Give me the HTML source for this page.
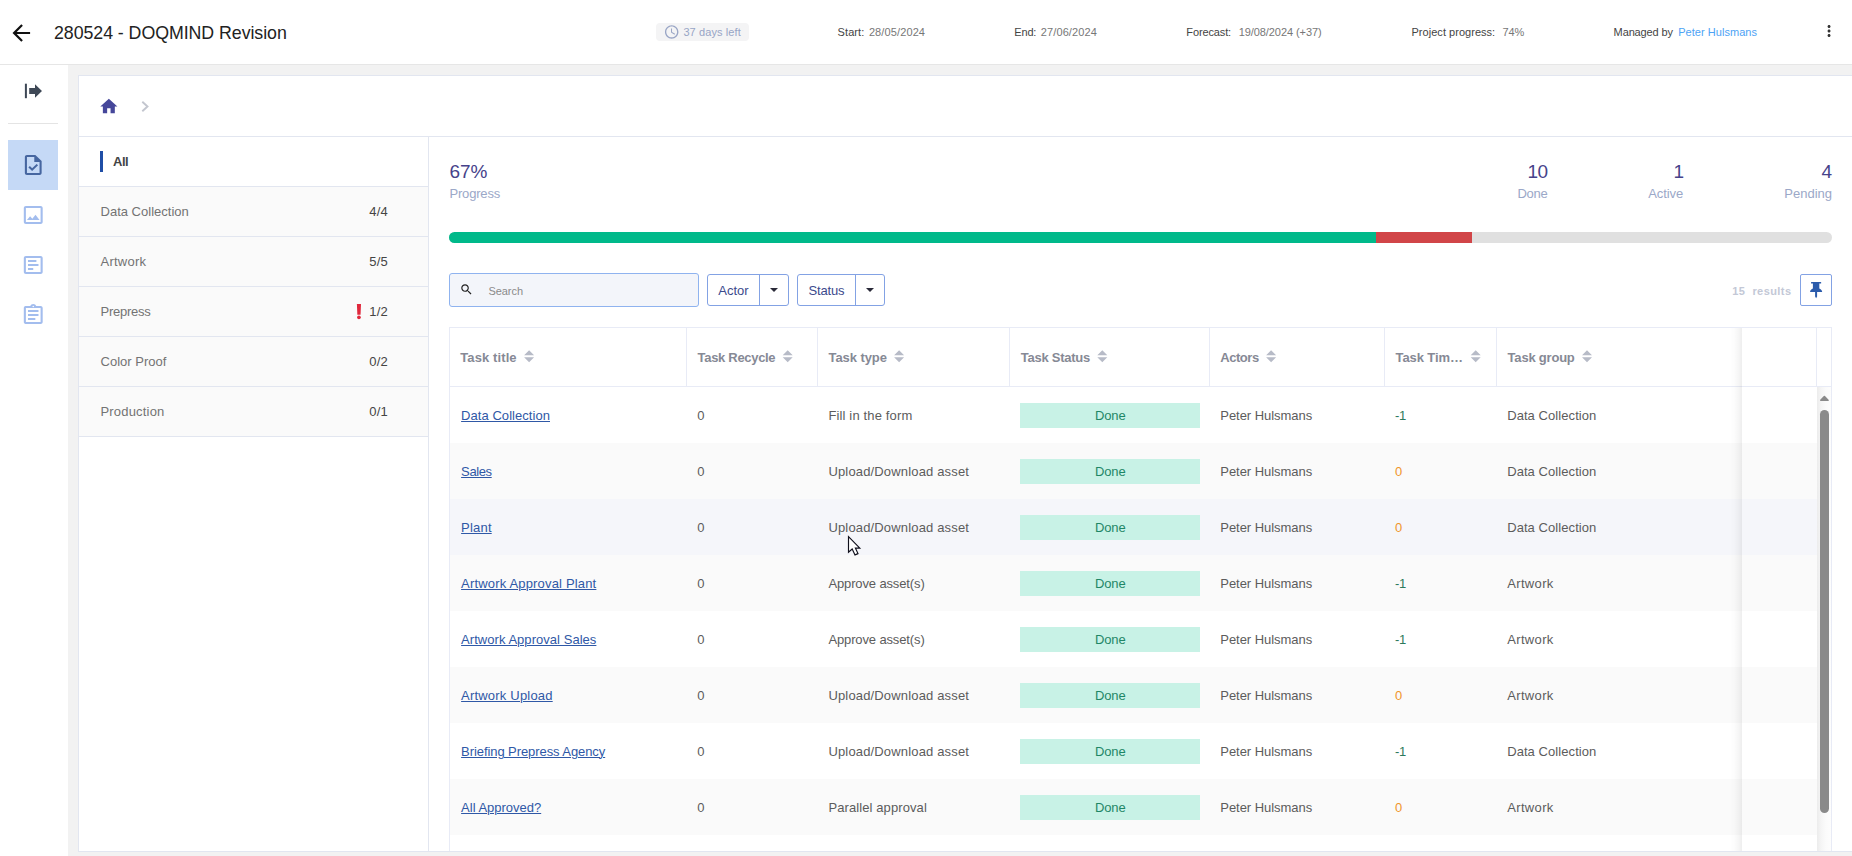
<!DOCTYPE html>
<html lang="en">
<head>
<meta charset="utf-8">
<title>280524 - DOQMIND Revision</title>
<style>
*{box-sizing:border-box;margin:0;padding:0}
html,body{width:1852px;height:856px;overflow:hidden;background:#f2f2f2;font-family:"Liberation Sans",sans-serif;color:#444}
.abs{position:absolute}
.t{position:absolute;white-space:nowrap;line-height:1}
a{color:inherit;text-decoration:underline;text-underline-offset:0.5px;text-decoration-thickness:1px}
#hdr{position:absolute;left:0;top:0;width:1852px;height:65px;background:#fff;border-bottom:1px solid #e6e6e6}
#side{position:absolute;left:0;top:65px;width:68px;height:791px;background:#fff}
#crumb{position:absolute;left:78px;top:75px;width:1780px;height:62px;background:#fff;border:1px solid #e2e6f0}
#left{position:absolute;left:78px;top:136px;width:351px;height:716px;background:#fff;border:1px solid #e2e6f0}
#main{position:absolute;left:428px;top:136px;width:1430px;height:716px;background:#fff;border:1px solid #e2e6f0}
</style>
</head>
<body>
<div id="hdr"></div>
<svg class="abs" style="left:8px;top:19px;overflow:visible" width="26.4" height="26.4" viewBox="-0.091 -0.727 24 24"><path fill="#111" d="M20 11H7.83l5.59-5.59L12 4l-8 8 8 8 1.41-1.41L7.83 13H20v-2z"/></svg>
<div class="t" style="left:54px;top:25px;font-size:17.8px;color:#222;letter-spacing:-0.058px;">280524 - DOQMIND Revision</div>
<div class="abs" style="left:656px;top:23px;width:93px;height:18px;background:#f4f4f5;border-radius:4px"></div>
<svg class="abs" style="left:663px;top:23px;overflow:visible" width="16.2" height="16.2" viewBox="-0.889 -1.185 24 24"><path fill="#9aa6c6" d="M11.99 2C6.47 2 2 6.48 2 12s4.47 10 9.99 10C17.52 22 22 17.52 22 12S17.52 2 11.99 2zM12 20c-4.42 0-8-3.58-8-8s3.58-8 8-8 8 3.58 8 8-3.58 8-8 8zm.5-13H11v6l5.25 3.15.75-1.23-4.5-2.67z"/></svg>
<div class="t" style="left:683.4px;top:27px;font-size:11px;color:#98a5c6;letter-spacing:0.095px;">37 days left</div>
<div class="t" style="left:837.6px;top:27px;font-size:11px;color:#444;letter-spacing:0.086px;">Start:</div>
<div class="t" style="left:868.9px;top:27px;font-size:11px;color:#777;letter-spacing:0.115px;">28/05/2024</div>
<div class="t" style="left:1014.3px;top:27px;font-size:11px;color:#444;letter-spacing:-0.182px;">End:</div>
<div class="t" style="left:1040.8px;top:27px;font-size:11px;color:#777;letter-spacing:0.105px;">27/06/2024</div>
<div class="t" style="left:1186.3px;top:27px;font-size:11px;color:#444;letter-spacing:-0.128px;">Forecast:</div>
<div class="t" style="left:1238.7px;top:27px;font-size:11px;color:#777;letter-spacing:-0.075px;">19/08/2024 (+37)</div>
<div class="t" style="left:1411.5px;top:27px;font-size:11px;color:#444;letter-spacing:0.033px;">Project progress:</div>
<div class="t" style="left:1502.5px;top:27px;font-size:11px;color:#777;letter-spacing:-0.105px;">74%</div>
<div class="t" style="left:1613.6px;top:27px;font-size:11px;color:#444;letter-spacing:-0.124px;">Managed by</div>
<div class="t" style="left:1678.2px;top:27px;font-size:11px;color:#4da3f5;letter-spacing:0.046px;">Peter Hulsmans</div>
<svg class="abs" style="left:1820px;top:22px;overflow:visible" width="18" height="18" viewBox="-0.067 0 24 24"><path fill="#333" d="M12 8c1.1 0 2-.9 2-2s-.9-2-2-2-2 .9-2 2 .9 2 2 2zm0 2c-1.1 0-2 .9-2 2s.9 2 2 2 2-.9 2-2-.9-2-2-2zm0 6c-1.1 0-2 .9-2 2s.9 2 2 2 2-.9 2-2-.9-2-2-2z"/></svg>
<div id="side"></div>
<svg class="abs" style="left:24px;top:83px;overflow:visible" width="19" height="16" viewBox="0 0 19 16"><rect x="0.9" y="0.7" width="2" height="14.5" fill="#3e4856"/><path fill="#3e4856" d="M5.2 5h5.8V1.2L18 7.95l-7 6.75v-3.8H5.2z"/></svg>
<div class="abs" style="left:8px;top:123px;width:50px;height:1px;background:#e4e4e4"></div>
<div class="abs" style="left:8px;top:140px;width:50px;height:50px;background:#c5d9f6"></div>
<svg class="abs" style="left:20px;top:153px;overflow:visible" width="25.2" height="24" viewBox="-0.619 0 24 24" preserveAspectRatio="none"><path fill="#4666a0" d="M14 2H6c-1.1 0-1.99.9-1.99 2L4 20c0 1.1.89 2 1.99 2H18c1.1 0 2-.9 2-2V8l-6-6zm4 18H6V4h7v5h5v11zM8.82 13.05L7.4 14.46 10.94 18l5.66-5.66-1.41-1.41-4.24 4.24-2.13-2.12z"/></svg>
<svg class="abs" style="left:20px;top:203px;overflow:visible" width="25.2" height="24" viewBox="-0.619 0 24 24" preserveAspectRatio="none"><path fill="#a3bdee" d="M19 5v14H5V5h14m0-2H5c-1.1 0-2 .9-2 2v14c0 1.1.9 2 2 2h14c1.1 0 2-.9 2-2V5c0-1.1-.9-2-2-2zm-4.86 8.86l-3 3.87L9 13.14 6 17h12l-3.86-5.14z"/></svg>
<svg class="abs" style="left:20px;top:253px;overflow:visible" width="25.2" height="24" viewBox="-0.619 0 24 24" preserveAspectRatio="none"><path fill="#a3bdee" d="M19 5v14H5V5h14m0-2H5c-1.1 0-2 .9-2 2v14c0 1.1.9 2 2 2h14c1.1 0 2-.9 2-2V5c0-1.1-.9-2-2-2zM7 7h8v2H7zm0 4h10v2H7zm0 4h5v2H7z"/></svg>
<svg class="abs" style="left:20px;top:303px;overflow:visible" width="25.2" height="24" viewBox="-0.619 0 24 24" preserveAspectRatio="none"><path fill="#a3bdee" d="M7 15h7v2H7zm0-4h10v2H7zm0-4h10v2H7zm12-4h-4.18C14.4 1.84 13.3 1 12 1c-1.3 0-2.4.84-2.82 2H5c-.14 0-.27.01-.4.04-.39.08-.74.28-1.01.55-.18.18-.33.4-.43.64-.1.23-.16.49-.16.77v14c0 .27.06.54.16.78s.25.45.43.64c.27.27.62.47 1.01.55.13.02.26.03.4.03h14c1.1 0 2-.9 2-2V5c0-1.1-.9-2-2-2zm-7-.25c.41 0 .75.34.75.75s-.34.75-.75.75-.75-.34-.75-.75.34-.75.75-.75zM19 19H5V5h14v14z"/></svg>
<div id="crumb"></div>
<svg class="abs" style="left:98px;top:96px;overflow:visible" width="20.5" height="20.5" viewBox="-0.702 -0.234 24 24"><path fill="#46479a" d="M10 20v-6h4v6h5v-8h3L12 3 2 12h3v8z"/></svg>
<svg class="abs" style="left:141px;top:101px;overflow:visible" width="8" height="11" viewBox="0 0 8 11"><path fill="none" stroke="#c3c6cf" stroke-width="1.9" d="M1.3 0.8L6.5 5.5 1.3 10.2"/></svg>
<div id="left"></div>
<div class="abs" style="left:79px;top:137px;width:349px;height:50px;border-bottom:1px solid #e2e6f0;background:#fff"></div>
<div class="abs" style="left:100px;top:151px;width:3px;height:21px;background:#1f4ea6"></div>
<div class="t" style="left:113.1px;top:155px;font-size:13px;color:#444;letter-spacing:-0.571px;font-weight:bold;">All</div>
<div class="abs" style="left:79px;top:187px;width:349px;height:50px;border-bottom:1px solid #e2e6f0;background:#fafafa"></div>
<div class="t" style="left:100.5px;top:205px;font-size:13px;color:#737373;letter-spacing:0.009px;">Data Collection</div>
<div class="t" style="left:369.2px;top:205px;font-size:13px;color:#444;letter-spacing:0.209px;">4/4</div>
<div class="abs" style="left:79px;top:237px;width:349px;height:50px;border-bottom:1px solid #e2e6f0;background:#fafafa"></div>
<div class="t" style="left:100.5px;top:255px;font-size:13px;color:#737373;letter-spacing:0.248px;">Artwork</div>
<div class="t" style="left:369.2px;top:255px;font-size:13px;color:#444;letter-spacing:0.209px;">5/5</div>
<div class="abs" style="left:79px;top:287px;width:349px;height:50px;border-bottom:1px solid #e2e6f0;background:#fafafa"></div>
<div class="t" style="left:100.5px;top:305px;font-size:13px;color:#737373;letter-spacing:-0.253px;">Prepress</div>
<div class="t" style="left:369.2px;top:305px;font-size:13px;color:#444;letter-spacing:0.209px;">1/2</div>
<svg class="abs" style="left:356px;top:304px;overflow:visible" width="6" height="16" viewBox="0 0 6 16"><path fill="#e0283c" d="M0.9 0h4.1l-0.45 10.7h-3.2z"/><circle cx="2.95" cy="13.3" r="1.85" fill="#e0283c"/></svg>
<div class="abs" style="left:79px;top:337px;width:349px;height:50px;border-bottom:1px solid #e2e6f0;background:#fafafa"></div>
<div class="t" style="left:100.5px;top:355px;font-size:13px;color:#737373;letter-spacing:0.013px;">Color Proof</div>
<div class="t" style="left:369.2px;top:355px;font-size:13px;color:#444;letter-spacing:0.209px;">0/2</div>
<div class="abs" style="left:79px;top:387px;width:349px;height:50px;border-bottom:1px solid #e2e6f0;background:#fafafa"></div>
<div class="t" style="left:100.5px;top:405px;font-size:13px;color:#737373;letter-spacing:0.185px;">Production</div>
<div class="t" style="left:369.2px;top:405px;font-size:13px;color:#444;letter-spacing:0.209px;">0/1</div>
<div id="main"></div>
<div class="t" style="left:449.4px;top:162px;font-size:19px;color:#46428a;letter-spacing:-0.043px;">67%</div>
<div class="t" style="left:449.5px;top:187px;font-size:13px;color:#9ba8c8;letter-spacing:-0.19px;">Progress</div>
<div class="t" style="left:1527.5px;top:162px;font-size:19px;color:#46428a;letter-spacing:-0.567px;">10</div>
<div class="t" style="left:1517.5px;top:187px;font-size:13px;color:#9ba8c8;letter-spacing:-0.27px;">Done</div>
<div class="t" style="left:1673.5px;top:162px;font-size:19px;color:#46428a;letter-spacing:-1.067px;">1</div>
<div class="t" style="left:1648.3px;top:187px;font-size:13px;color:#9ba8c8;letter-spacing:-0.117px;">Active</div>
<div class="t" style="left:1821.5px;top:162px;font-size:19px;color:#46428a;letter-spacing:-0.067px;">4</div>
<div class="t" style="left:1784.3px;top:187px;font-size:13px;color:#9ba8c8;letter-spacing:-0.002px;">Pending</div>
<div class="abs" style="left:449px;top:232px;width:1383px;height:11px;border-radius:6px;background:#e0e0e0;overflow:hidden"><div class="abs" style="left:0;top:0;width:927px;height:11px;background:#00b98a"></div><div class="abs" style="left:927px;top:0;width:96px;height:11px;background:#d14548"></div></div>
<div class="abs" style="left:449px;top:273px;width:250px;height:34px;border:1px solid #8fb3ef;border-radius:3px;background:#f3f5fa"></div>
<svg class="abs" style="left:459px;top:282px;overflow:visible" width="14" height="14" viewBox="-0.857 -0.857 24 24"><path fill="#222" d="M15.5 14h-.79l-.28-.27C15.41 12.59 16 11.11 16 9.5 16 5.91 13.09 3 9.5 3S3 5.91 3 9.5 5.91 16 9.5 16c1.61 0 3.09-.59 4.23-1.57l.27.28v.79l5 4.99L20.49 19l-4.99-5zm-6 0C7.01 14 5 11.99 5 9.5S7.01 5 9.5 5 14 7.01 14 9.5 11.99 14 9.5 14z"/></svg>
<div class="t" style="left:488.4px;top:286px;font-size:11px;color:#8a8a8a;letter-spacing:-0.042px;">Search</div>
<div class="abs" style="left:707px;top:274px;width:82px;height:32px;border:1px solid #83a2e4;border-radius:3px;background:#fff"></div>
<div class="abs" style="left:759px;top:274px;width:1px;height:32px;background:#83a2e4"></div>
<div class="t" style="left:718.2px;top:284px;font-size:13px;color:#3c4a8c;letter-spacing:0.031px;">Actor</div>
<svg class="abs" style="left:770px;top:288px;overflow:visible" width="8" height="4" viewBox="0 0 8 4"><path fill="#2a2a38" d="M0 0h8L4 4z"/></svg>
<div class="abs" style="left:797px;top:274px;width:88px;height:32px;border:1px solid #83a2e4;border-radius:3px;background:#fff"></div>
<div class="abs" style="left:855px;top:274px;width:1px;height:32px;background:#83a2e4"></div>
<div class="t" style="left:808.4px;top:284px;font-size:13px;color:#3c4a8c;letter-spacing:-0.142px;">Status</div>
<svg class="abs" style="left:866px;top:288px;overflow:visible" width="8" height="4" viewBox="0 0 8 4"><path fill="#2a2a38" d="M0 0h8L4 4z"/></svg>
<div class="t" style="left:1732.3px;top:286px;font-size:11px;color:#c3c8d6;letter-spacing:0.434px;font-weight:bold;">15&nbsp;&nbsp;results</div>
<div class="abs" style="left:1800px;top:274px;width:32px;height:32px;border:1px solid #83a2e4;border-radius:2px;background:#fff"></div>
<svg class="abs" style="left:1810px;top:281px;overflow:visible" width="12" height="16.4" viewBox="-0.1 -0.9 12 16.4"><path fill="#2b5bab" d="M1.4 0h9.2a.5.5 0 0 1 .5.5v.7a.5.5 0 0 1-.5.5H9.2v4.9c1.4.6 2.6 1.7 2.8 3v.5H7v4.6l-1 1.7-1-1.7V10.1H0v-.5c.2-1.3 1.4-2.4 2.8-3V1.7H1.4a.5.5 0 0 1-.5-.5V.5a.5.5 0 0 1 .5-.5z"/></svg>
<div class="abs" style="left:449px;top:327px;width:1383px;height:525px;border:1px solid #e8ebf6;border-bottom:none;background:#fff"></div>
<div class="abs" style="left:450px;top:387px;width:1367px;height:56px;background:#fff"></div>
<div class="t" style="left:461.1px;top:409px;font-size:13px;color:#2f58a6;letter-spacing:0.049px;"><a>Data Collection</a></div>
<div class="t" style="left:697.2px;top:409px;font-size:13px;color:#5c5c5c;letter-spacing:-1.03px;">0</div>
<div class="t" style="left:828.4px;top:409px;font-size:13px;color:#5c5c5c;letter-spacing:0.148px;">Fill in the form</div>
<div class="abs" style="left:1020px;top:403px;width:180px;height:25px;background:#c8f2e6"></div>
<div class="t" style="left:1094.9px;top:409px;font-size:13px;color:#1f8766;letter-spacing:-0.095px;">Done</div>
<div class="t" style="left:1220.3px;top:409px;font-size:13px;color:#5c5c5c;letter-spacing:-0.042px;">Peter Hulsmans</div>
<div class="t" style="left:1394.9px;top:409px;font-size:13px;color:#2c7a5c;letter-spacing:-0.23px;">-1</div>
<div class="t" style="left:1507.2px;top:409px;font-size:13px;color:#5c5c5c;letter-spacing:0.069px;">Data Collection</div>
<div class="abs" style="left:450px;top:443px;width:1367px;height:56px;background:#fafafa"></div>
<div class="t" style="left:461.1px;top:465px;font-size:13px;color:#2f58a6;letter-spacing:-0.384px;"><a>Sales</a></div>
<div class="t" style="left:697.2px;top:465px;font-size:13px;color:#5c5c5c;letter-spacing:-1.03px;">0</div>
<div class="t" style="left:828.4px;top:465px;font-size:13px;color:#5c5c5c;letter-spacing:0.161px;">Upload/Download asset</div>
<div class="abs" style="left:1020px;top:459px;width:180px;height:25px;background:#c8f2e6"></div>
<div class="t" style="left:1094.9px;top:465px;font-size:13px;color:#1f8766;letter-spacing:-0.095px;">Done</div>
<div class="t" style="left:1220.3px;top:465px;font-size:13px;color:#5c5c5c;letter-spacing:-0.042px;">Peter Hulsmans</div>
<div class="t" style="left:1394.9px;top:465px;font-size:13px;color:#f0952b;letter-spacing:-0.33px;">0</div>
<div class="t" style="left:1507.2px;top:465px;font-size:13px;color:#5c5c5c;letter-spacing:0.069px;">Data Collection</div>
<div class="abs" style="left:450px;top:499px;width:1367px;height:56px;background:#f5f6fa"></div>
<div class="t" style="left:461.1px;top:521px;font-size:13px;color:#2f58a6;letter-spacing:0.194px;"><a>Plant</a></div>
<div class="t" style="left:697.2px;top:521px;font-size:13px;color:#5c5c5c;letter-spacing:-1.03px;">0</div>
<div class="t" style="left:828.4px;top:521px;font-size:13px;color:#5c5c5c;letter-spacing:0.161px;">Upload/Download asset</div>
<div class="abs" style="left:1020px;top:515px;width:180px;height:25px;background:#c8f2e6"></div>
<div class="t" style="left:1094.9px;top:521px;font-size:13px;color:#1f8766;letter-spacing:-0.095px;">Done</div>
<div class="t" style="left:1220.3px;top:521px;font-size:13px;color:#5c5c5c;letter-spacing:-0.042px;">Peter Hulsmans</div>
<div class="t" style="left:1394.9px;top:521px;font-size:13px;color:#f0952b;letter-spacing:-0.33px;">0</div>
<div class="t" style="left:1507.2px;top:521px;font-size:13px;color:#5c5c5c;letter-spacing:0.069px;">Data Collection</div>
<div class="abs" style="left:450px;top:555px;width:1367px;height:56px;background:#fafafa"></div>
<div class="t" style="left:461.1px;top:577px;font-size:13px;color:#2f58a6;letter-spacing:0.172px;"><a>Artwork Approval Plant</a></div>
<div class="t" style="left:697.2px;top:577px;font-size:13px;color:#5c5c5c;letter-spacing:-1.03px;">0</div>
<div class="t" style="left:828.4px;top:577px;font-size:13px;color:#5c5c5c;letter-spacing:-0.129px;">Approve asset(s)</div>
<div class="abs" style="left:1020px;top:571px;width:180px;height:25px;background:#c8f2e6"></div>
<div class="t" style="left:1094.9px;top:577px;font-size:13px;color:#1f8766;letter-spacing:-0.095px;">Done</div>
<div class="t" style="left:1220.3px;top:577px;font-size:13px;color:#5c5c5c;letter-spacing:-0.042px;">Peter Hulsmans</div>
<div class="t" style="left:1394.9px;top:577px;font-size:13px;color:#2c7a5c;letter-spacing:-0.23px;">-1</div>
<div class="t" style="left:1507.2px;top:577px;font-size:13px;color:#5c5c5c;letter-spacing:0.348px;">Artwork</div>
<div class="abs" style="left:450px;top:611px;width:1367px;height:56px;background:#fff"></div>
<div class="t" style="left:461.1px;top:633px;font-size:13px;color:#2f58a6;letter-spacing:0.041px;"><a>Artwork Approval Sales</a></div>
<div class="t" style="left:697.2px;top:633px;font-size:13px;color:#5c5c5c;letter-spacing:-1.03px;">0</div>
<div class="t" style="left:828.4px;top:633px;font-size:13px;color:#5c5c5c;letter-spacing:-0.129px;">Approve asset(s)</div>
<div class="abs" style="left:1020px;top:627px;width:180px;height:25px;background:#c8f2e6"></div>
<div class="t" style="left:1094.9px;top:633px;font-size:13px;color:#1f8766;letter-spacing:-0.095px;">Done</div>
<div class="t" style="left:1220.3px;top:633px;font-size:13px;color:#5c5c5c;letter-spacing:-0.042px;">Peter Hulsmans</div>
<div class="t" style="left:1394.9px;top:633px;font-size:13px;color:#2c7a5c;letter-spacing:-0.23px;">-1</div>
<div class="t" style="left:1507.2px;top:633px;font-size:13px;color:#5c5c5c;letter-spacing:0.348px;">Artwork</div>
<div class="abs" style="left:450px;top:667px;width:1367px;height:56px;background:#fafafa"></div>
<div class="t" style="left:461.1px;top:689px;font-size:13px;color:#2f58a6;letter-spacing:0.195px;"><a>Artwork Upload</a></div>
<div class="t" style="left:697.2px;top:689px;font-size:13px;color:#5c5c5c;letter-spacing:-1.03px;">0</div>
<div class="t" style="left:828.4px;top:689px;font-size:13px;color:#5c5c5c;letter-spacing:0.161px;">Upload/Download asset</div>
<div class="abs" style="left:1020px;top:683px;width:180px;height:25px;background:#c8f2e6"></div>
<div class="t" style="left:1094.9px;top:689px;font-size:13px;color:#1f8766;letter-spacing:-0.095px;">Done</div>
<div class="t" style="left:1220.3px;top:689px;font-size:13px;color:#5c5c5c;letter-spacing:-0.042px;">Peter Hulsmans</div>
<div class="t" style="left:1394.9px;top:689px;font-size:13px;color:#f0952b;letter-spacing:-0.33px;">0</div>
<div class="t" style="left:1507.2px;top:689px;font-size:13px;color:#5c5c5c;letter-spacing:0.348px;">Artwork</div>
<div class="abs" style="left:450px;top:723px;width:1367px;height:56px;background:#fff"></div>
<div class="t" style="left:461.1px;top:745px;font-size:13px;color:#2f58a6;letter-spacing:-0.078px;"><a>Briefing Prepress Agency</a></div>
<div class="t" style="left:697.2px;top:745px;font-size:13px;color:#5c5c5c;letter-spacing:-1.03px;">0</div>
<div class="t" style="left:828.4px;top:745px;font-size:13px;color:#5c5c5c;letter-spacing:0.161px;">Upload/Download asset</div>
<div class="abs" style="left:1020px;top:739px;width:180px;height:25px;background:#c8f2e6"></div>
<div class="t" style="left:1094.9px;top:745px;font-size:13px;color:#1f8766;letter-spacing:-0.095px;">Done</div>
<div class="t" style="left:1220.3px;top:745px;font-size:13px;color:#5c5c5c;letter-spacing:-0.042px;">Peter Hulsmans</div>
<div class="t" style="left:1394.9px;top:745px;font-size:13px;color:#2c7a5c;letter-spacing:-0.23px;">-1</div>
<div class="t" style="left:1507.2px;top:745px;font-size:13px;color:#5c5c5c;letter-spacing:0.069px;">Data Collection</div>
<div class="abs" style="left:450px;top:779px;width:1367px;height:56px;background:#fafafa"></div>
<div class="t" style="left:461.1px;top:801px;font-size:13px;color:#2f58a6;letter-spacing:-0.01px;"><a>All Approved?</a></div>
<div class="t" style="left:697.2px;top:801px;font-size:13px;color:#5c5c5c;letter-spacing:-1.03px;">0</div>
<div class="t" style="left:828.4px;top:801px;font-size:13px;color:#5c5c5c;letter-spacing:0.098px;">Parallel approval</div>
<div class="abs" style="left:1020px;top:795px;width:180px;height:25px;background:#c8f2e6"></div>
<div class="t" style="left:1094.9px;top:801px;font-size:13px;color:#1f8766;letter-spacing:-0.095px;">Done</div>
<div class="t" style="left:1220.3px;top:801px;font-size:13px;color:#5c5c5c;letter-spacing:-0.042px;">Peter Hulsmans</div>
<div class="t" style="left:1394.9px;top:801px;font-size:13px;color:#f0952b;letter-spacing:-0.33px;">0</div>
<div class="t" style="left:1507.2px;top:801px;font-size:13px;color:#5c5c5c;letter-spacing:0.348px;">Artwork</div>
<div class="abs" style="left:450px;top:328px;width:1381px;height:59px;background:#fff;border-bottom:1px solid #e8ebf6"></div>
<div class="t" style="left:460.3px;top:351px;font-size:13px;color:#868995;letter-spacing:0.101px;font-weight:bold;">Task title</div>
<svg class="abs" style="left:524px;top:350px;overflow:visible" width="10" height="12" viewBox="-0.1 -0.3 10 12"><path fill="#b7bbc7" d="M0 5L5 0l5 5zM0 7L5 12l5-5z"/></svg>
<div class="abs" style="left:686px;top:328px;width:1px;height:59px;background:#e8ebf6"></div>
<div class="t" style="left:697.6px;top:351px;font-size:13px;color:#868995;letter-spacing:-0.311px;font-weight:bold;">Task Recycle</div>
<svg class="abs" style="left:782px;top:350px;overflow:visible" width="10" height="12" viewBox="-0.7 -0.3 10 12"><path fill="#b7bbc7" d="M0 5L5 0l5 5zM0 7L5 12l5-5z"/></svg>
<div class="abs" style="left:817px;top:328px;width:1px;height:59px;background:#e8ebf6"></div>
<div class="t" style="left:828.5px;top:351px;font-size:13px;color:#868995;letter-spacing:-0.079px;font-weight:bold;">Task type</div>
<svg class="abs" style="left:894px;top:350px;overflow:visible" width="10" height="12" viewBox="-0.1 -0.3 10 12"><path fill="#b7bbc7" d="M0 5L5 0l5 5zM0 7L5 12l5-5z"/></svg>
<div class="abs" style="left:1009px;top:328px;width:1px;height:59px;background:#e8ebf6"></div>
<div class="t" style="left:1020.7px;top:351px;font-size:13px;color:#868995;letter-spacing:-0.246px;font-weight:bold;">Task Status</div>
<svg class="abs" style="left:1097px;top:350px;overflow:visible" width="10" height="12" viewBox="-0.3 -0.3 10 12"><path fill="#b7bbc7" d="M0 5L5 0l5 5zM0 7L5 12l5-5z"/></svg>
<div class="abs" style="left:1209px;top:328px;width:1px;height:59px;background:#e8ebf6"></div>
<div class="t" style="left:1220.2px;top:351px;font-size:13px;color:#868995;letter-spacing:-0.43px;font-weight:bold;">Actors</div>
<svg class="abs" style="left:1266px;top:350px;overflow:visible" width="10" height="12" viewBox="-0.1 -0.3 10 12"><path fill="#b7bbc7" d="M0 5L5 0l5 5zM0 7L5 12l5-5z"/></svg>
<div class="abs" style="left:1384px;top:328px;width:1px;height:59px;background:#e8ebf6"></div>
<div class="t" style="left:1395.5px;top:351px;font-size:13px;color:#868995;letter-spacing:-0.084px;font-weight:bold;">Task Tim…</div>
<svg class="abs" style="left:1470px;top:350px;overflow:visible" width="10" height="12" viewBox="-0.7 -0.3 10 12"><path fill="#b7bbc7" d="M0 5L5 0l5 5zM0 7L5 12l5-5z"/></svg>
<div class="abs" style="left:1496px;top:328px;width:1px;height:59px;background:#e8ebf6"></div>
<div class="t" style="left:1507.6px;top:351px;font-size:13px;color:#868995;letter-spacing:-0.21px;font-weight:bold;">Task group</div>
<svg class="abs" style="left:1582px;top:350px;overflow:visible" width="10" height="12" viewBox="0 -0.3 10 12"><path fill="#b7bbc7" d="M0 5L5 0l5 5zM0 7L5 12l5-5z"/></svg>
<div class="abs" style="left:1730px;top:328px;width:12px;height:523px;background:linear-gradient(90deg,rgba(0,0,0,0),rgba(0,0,0,0.012) 35%,rgba(0,0,0,0.035) 70%,rgba(0,0,0,0.065))"></div>
<div class="abs" style="left:1816px;top:328px;width:1px;height:59px;background:#e8ebf6"></div>
<div class="abs" style="left:1817px;top:387px;width:14px;height:465px;background:linear-gradient(90deg,#ececec,#f5f5f5 30%,#fbfbfb 65%,#fdfdfd)"></div>
<svg class="abs" style="left:1819px;top:395px;overflow:visible" width="10" height="6" viewBox="0 0 10 6"><path fill="#8a8a8a" stroke="#8a8a8a" stroke-width="1.6" stroke-linejoin="round" d="M1.8 5.3L5.4 1.5l3.6 3.8z"/></svg>
<div class="abs" style="left:1820px;top:410px;width:9px;height:403px;border-radius:5px;background:#8a8a8a"></div>
<div class="abs" style="left:78px;top:851px;width:1774px;height:1px;background:#e2e6f0"></div>
<div class="abs" style="left:68px;top:852px;width:1784px;height:4px;background:#f2f2f2"></div>
<svg class="abs" style="left:846px;top:534px;overflow:visible" width="17" height="24" viewBox="-2.5 -2.1 17 24"><path fill="#fff" stroke="#10101c" stroke-width="1.15" stroke-linejoin="miter" d="M0 0.6V16.2L3.7 12.9 6.5 18.8 9.5 17.5 6.9 12H11.3z"/></svg>
</body>
</html>
